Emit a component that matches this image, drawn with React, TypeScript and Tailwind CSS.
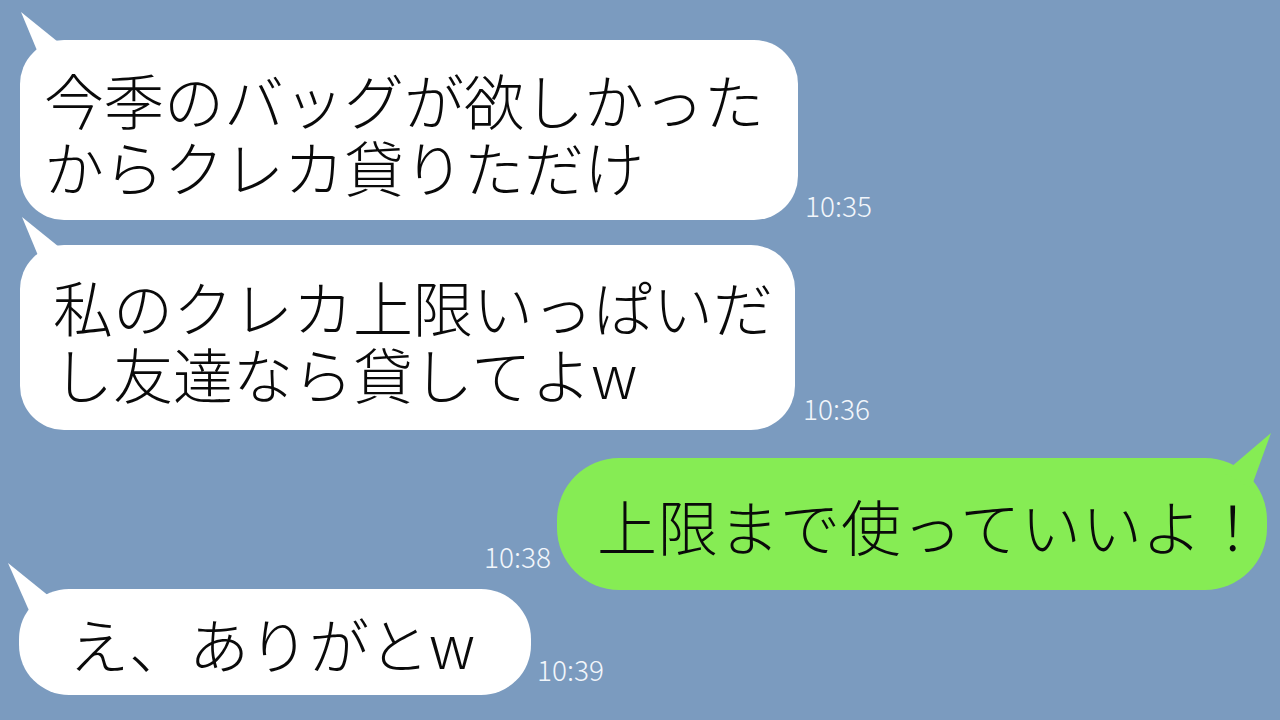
const font = "font-['Noto_Sans_CJK_JP','Noto_Sans',sans-serif]";

function Tail({ points, right }: { points: string; right?: boolean }) {
  return (
    <svg
      width={1}
      height={1}
      className={`absolute top-0 overflow-visible ${right ? "right-0" : "left-0"}`}
    >
      <polygon points={points} fill="currentColor" />
    </svg>
  );
}

function Time({ t, className }: { t: string; className?: string }) {
  return (
    <span className={`text-[28px] font-light leading-none text-[#f2f6fb] ${className ?? ""}`}>{t}</span>
  );
}

export default function App() {
  return (
    <div className={`w-full h-[720px] overflow-hidden bg-[#7b9bbf] ${font}`}>
      <div className="flex flex-col pt-[40px]">
        {/* 1 */}
        <div className="flex items-end pl-[20px]">
          <div className="relative w-[778px] h-[180px] rounded-[44px] bg-white text-white pl-[24px] pt-[3px] flex flex-col justify-center">
            <Tail points="1,-28 21,20 48,10" />
            <p className="text-[60px] font-light leading-[67px] text-[#0a0a0a] whitespace-nowrap">
              今季のバッグが欲しかった
              <br />
              からクレカ貸りただけ
            </p>
          </div>
          <Time t="10:35" className="ml-[7px] mb-[1px]" />
        </div>

        {/* 2 */}
        <div className="flex items-end pl-[20px] mt-[25px]">
          <div className="relative w-[775px] h-[185px] rounded-[44px] bg-white text-white pl-[33px] pt-[2px] flex flex-col justify-center">
            <Tail points="2,-28 22,20 49,10" />
            <p className="text-[60px] font-light leading-[67px] text-[#0a0a0a] whitespace-nowrap">
              私のクレカ上限いっぱいだ
              <br />
              し友達なら貸してよw
            </p>
          </div>
          <Time t="10:36" className="ml-[8px] mb-[8px]" />
        </div>

        {/* 3 */}
        <div className="flex items-end justify-end pr-[13px] mt-[28px]">
          <Time t="10:38" className="mr-[6px] mb-[20px]" />
          <div className="relative w-[710px] h-[132px] rounded-[62px] bg-[#86ec54] text-[#86ec54] pl-[40px] flex flex-col justify-center">
            <Tail right points="5,-25 -42,15 -15,30" />
            <p className="text-[60px] font-light leading-[67px] text-[#0a0a0a] whitespace-nowrap tracking-[1px]">
              上限まで使っていいよ！
            </p>
          </div>
        </div>

        {/* 4 */}
        <div className="flex items-end pl-[19px] -mt-[1px]">
          <div className="relative w-[512px] h-[106px] rounded-[50px] bg-white text-white pl-[50px] flex flex-col justify-center">
            <Tail points="-11,-26 12,26 36,12" />
            <p className="text-[60px] font-light leading-[67px] text-[#0a0a0a] whitespace-nowrap">
              え、ありがとw
            </p>
          </div>
          <Time t="10:39" className="ml-[6px] mb-[12px]" />
        </div>
      </div>
    </div>
  );
}
